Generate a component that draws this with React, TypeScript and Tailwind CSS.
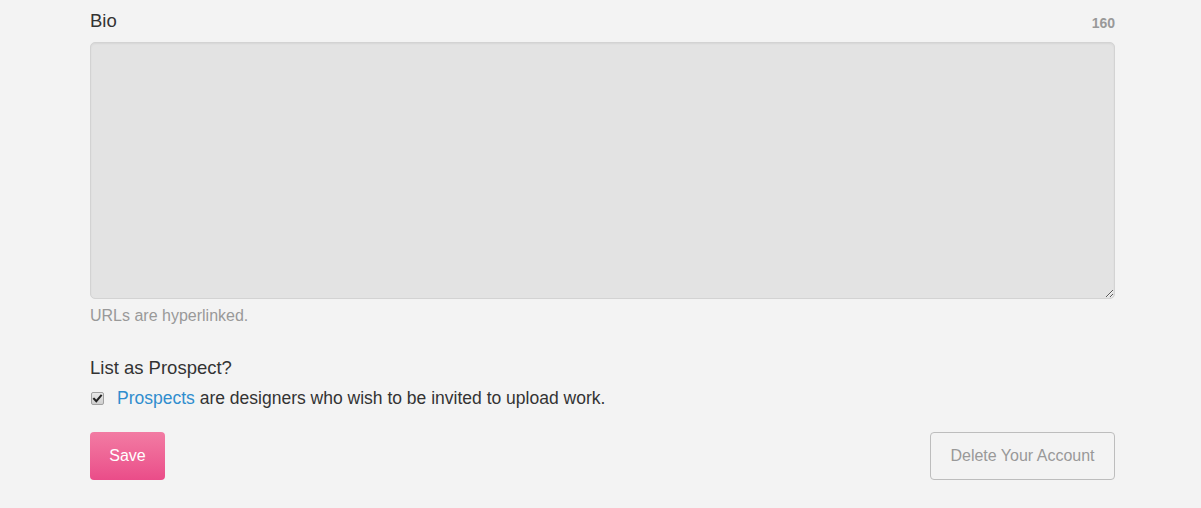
import React, { useState } from 'react';

export default function App() {
  const [bio, setBio] = useState('');
  const [prospect, setProspect] = useState(true);

  return (
    <div className="min-h-[508px] w-full bg-[#f3f3f3] font-['Liberation_Sans',Arial,sans-serif] text-[#333]">
      <div className="ml-[90px] w-[1025px]">
        {/* Bio */}
        <div className="flex items-end justify-between pt-[9px]">
          <label className="text-[18.5px] leading-[24px]">Bio</label>
          <span className="text-[14px] font-bold text-[#999] leading-[16px] mb-[2px]">{160 - bio.length}</span>
        </div>
        <textarea
          value={bio}
          onChange={e => setBio(e.target.value)}
          maxLength={160}
          className="mt-[9px] block w-full h-[257px] rounded-[5px] border border-[#d3d3d3] bg-[#e3e3e3] p-2 outline-none shadow-[inset_0_1px_2px_rgba(0,0,0,0.06)]"
        />
        <p className="mt-[6px] text-[16px] leading-[22px] text-[#999]">URLs are hyperlinked.</p>

        {/* Prospect */}
        <p className="mt-[29px] text-[18.5px] leading-[24px]">List as Prospect?</p>
        <div className="mt-[7px] flex items-center">
          <label className="relative ml-[1px] w-[13px] h-[13px] shrink-0">
            <input
              type="checkbox"
              checked={prospect}
              onChange={e => setProspect(e.target.checked)}
              className="absolute inset-0 m-0 appearance-none w-[13px] h-[13px] rounded-[2px] border border-[#a0a0a0] bg-gradient-to-b from-[#e8e8e8] to-[#cfcfcf]"
            />
            {prospect && (
              <svg viewBox="0 0 13 13" className="pointer-events-none absolute inset-0 w-[13px] h-[13px]">
                <path d="M3 6.8 L5.3 9.2 L10 3.6" fill="none" stroke="#222" strokeWidth="2" strokeLinecap="square" />
              </svg>
            )}
          </label>
          <span className="ml-[13px] text-[17.5px] leading-[22px]">
            <a href="#" className="text-[#2f8dce]">Prospects</a> are designers who wish to be invited to upload work.
          </span>
        </div>

        {/* Actions */}
        <div className="mt-[23px] flex items-center justify-between">
          <button className="h-[48px] w-[75px] rounded-[4px] bg-gradient-to-b from-[#f27ba3] to-[#ea4c89] text-white text-[16px]">
            Save
          </button>
          <button className="h-[48px] w-[185px] rounded-[4px] border border-[#bdbdbd] bg-[#f3f3f3] text-[#999] text-[16px]">
            Delete Your Account
          </button>
        </div>
      </div>
    </div>
  );
}
